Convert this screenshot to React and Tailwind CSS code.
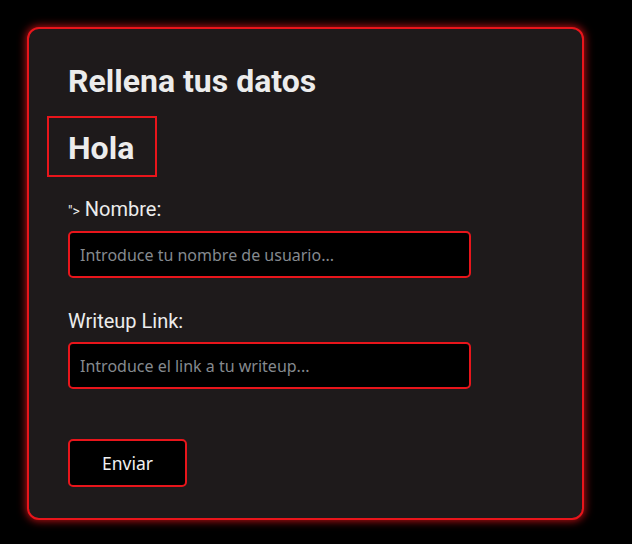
export default function App() {
  return (
    <div className="min-h-[544px] w-full bg-black pt-[27px] pl-[27px]">
      <div className="w-[557px] h-[493px] rounded-[12px] border-2 border-[#e8151b] bg-[#1e1a1b] shadow-[0_0_8px_1px_rgba(230,20,25,0.8)] pl-[39px] pt-[34px] flex flex-col items-start" style={{ fontFamily: "Roboto, 'Liberation Sans', sans-serif" }}>
        <h2 className="text-[32px] leading-[36px] font-bold text-[#ececec]">Rellena tus datos</h2>
        <div className="mt-[17px] ml-[-21px] h-[61px] border-2 border-[#e8151b] pl-[19px] pr-[21px] pt-[4px]">
          <h1 className="text-[32px] leading-[53px] font-bold text-[#ececec]">Hola</h1>
        </div>
        <div className="mt-[20px] h-[24px] flex items-baseline text-[#ececec]">
          <span className="text-[14px] mr-[5px]">"&gt;</span>
          <label className="text-[20px] leading-[24px]">Nombre:</label>
        </div>
        <input
          placeholder="Introduce tu nombre de usuario..."
          className="mt-[10px] w-[403px] h-[47px] rounded-[5px] border-2 border-[#e8151b] bg-black px-[10px] text-[16px] text-white placeholder:text-[#858a8f] outline-none"
          style={{ fontFamily: "'Noto Sans', 'Open Sans', sans-serif" }}
        />
        <label className="mt-[31px] h-[24px] text-[20px] leading-[24px] text-[#ececec]">Writeup Link:</label>
        <input
          placeholder="Introduce el link a tu writeup..."
          className="mt-[9px] w-[403px] h-[47px] rounded-[5px] border-2 border-[#e8151b] bg-black px-[10px] text-[16px] text-white placeholder:text-[#858a8f] outline-none"
          style={{ fontFamily: "'Noto Sans', 'Open Sans', sans-serif" }}
        />
        <button
          className="mt-[50px] w-[119px] h-[48px] rounded-[5px] border-2 border-[#e8151b] bg-black text-[17.5px] text-[#f0f0f0]"
          style={{ fontFamily: "'Noto Sans', 'Open Sans', sans-serif" }}
        >
          Enviar
        </button>
      </div>
    </div>
  );
}
